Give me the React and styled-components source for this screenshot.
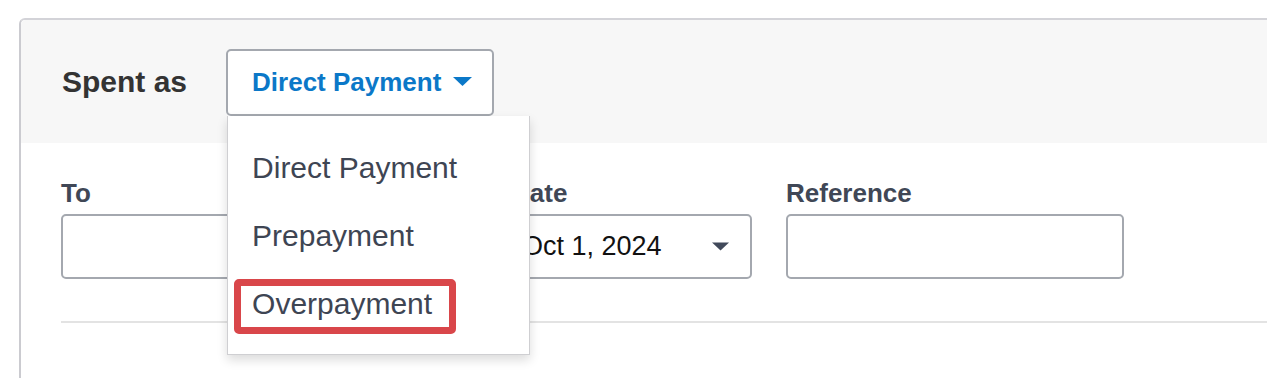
import React from 'react'
import styled, { createGlobalStyle } from 'styled-components'

const GlobalStyle = createGlobalStyle`
  html, body {
    margin: 0;
    padding: 0;
    background: #ffffff;
    overflow: hidden;
  }
  body {
    font-family: "Liberation Sans", Arial, sans-serif;
  }
`

const options = ['Direct Payment', 'Prepayment', 'Overpayment']

const Caret = ({ color, width = 19, height = 9 }) => (
  <svg width={width} height={height} viewBox="0 0 19 9" aria-hidden="true">
    <path d="M0 0 H19 L9.5 9 Z" fill={color} />
  </svg>
)

const App = () => {
  const highlighted = 'Overpayment'

  return (
    <>
      <GlobalStyle />
      <Page>
        <Panel>
          <Header>
            <SpentLabel>Spent as</SpentLabel>
            <SelectWrap>
              <SelectButton type="button">
                <span>Direct Payment</span>
                <Caret color="#0b78c8" />
              </SelectButton>
              <Menu>
                {options.map((option) => (
                  <MenuItem key={option}>
                    {option}
                    {option === highlighted && <Highlight />}
                  </MenuItem>
                ))}
              </Menu>
            </SelectWrap>
          </Header>

          <Body>
            <FieldsRow>
              <Field width={416}>
                <FieldLabel>To</FieldLabel>
                <Input />
              </Field>
              <Field width={241}>
                <FieldLabel>Date</FieldLabel>
                <DateInput>
                  <DateText>Oct 1, 2024</DateText>
                  <Caret color="#41495a" width={17} />
                </DateInput>
              </Field>
              <Field width={338}>
                <FieldLabel>Reference</FieldLabel>
                <Input />
              </Field>
            </FieldsRow>
            <Divider />
          </Body>
        </Panel>
      </Page>
    </>
  )
}

const Page = styled.div`
  padding: 18px 0 0 19px;
  height: 360px;
`

const Panel = styled.div`
  height: 100%;
  margin-right: -12px;
  border-top: 2px solid #d3d3d8;
  border-left: 2px solid #cbcbd0;
  border-top-left-radius: 6px;
  background: #ffffff;
`

const Header = styled.div`
  display: flex;
  align-items: center;
  height: 123px;
  padding-left: 41px;
  background: #f7f7f7;
  border-top-left-radius: 5px;
  position: relative;
  z-index: 2;
`

const SpentLabel = styled.h3`
  margin: 0;
  font-size: 30px;
  font-weight: 700;
  color: #333333;
`

const SelectWrap = styled.div`
  position: relative;
  margin-left: 39px;
  margin-top: 1px;
`

const SelectButton = styled.button`
  display: flex;
  align-items: center;
  gap: 12px;
  width: 268px;
  height: 67px;
  padding: 0 0 0 24px;
  border: 2px solid #a4a8af;
  border-radius: 5px;
  background: #ffffff;
  font-family: inherit;
  font-size: 26px;
  font-weight: 700;
  color: #0b78c8;
  cursor: pointer;

  svg {
    margin-top: -2px;
  }
`

const Menu = styled.ul`
  position: absolute;
  top: 67px;
  left: 1px;
  width: 301px;
  margin: 0;
  padding: 18px 0 16px;
  list-style: none;
  background: #ffffff;
  border: 1px solid #cfcfd2;
  border-top: none;
  box-shadow: 0 5px 10px rgba(0, 0, 0, 0.14);
`

const MenuItem = styled.li`
  position: relative;
  display: flex;
  align-items: center;
  height: 68px;
  padding-left: 24px;
  font-size: 30px;
  color: #3e4553;
`

const Highlight = styled.span`
  position: absolute;
  top: 9px;
  left: 6px;
  width: 222px;
  height: 55px;
  box-sizing: border-box;
  border: 7px solid #d9464a;
  border-radius: 5px;
  pointer-events: none;
`

const Body = styled.div`
  padding: 35px 0 0 40px;
`

const FieldsRow = styled.div`
  display: flex;
  gap: 34px;
`

const Field = styled.div`
  display: flex;
  flex-direction: column;
  width: ${(props) => props.width}px;
`

const FieldLabel = styled.label`
  margin-bottom: 6px;
  font-size: 26px;
  font-weight: 700;
  line-height: 30px;
  color: #404756;
`

const Input = styled.div`
  box-sizing: border-box;
  height: 65px;
  border: 2px solid #a4a8af;
  border-radius: 5px;
  background: #ffffff;
`

const DateInput = styled(Input)`
  display: flex;
  align-items: center;
  justify-content: space-between;
  padding: 0 21px 0 9px;
`

const DateText = styled.span`
  font-size: 27px;
  color: #111111;
`

const Divider = styled.div`
  height: 2px;
  margin-top: 42px;
  background: #e3e3e3;
`

export default App
